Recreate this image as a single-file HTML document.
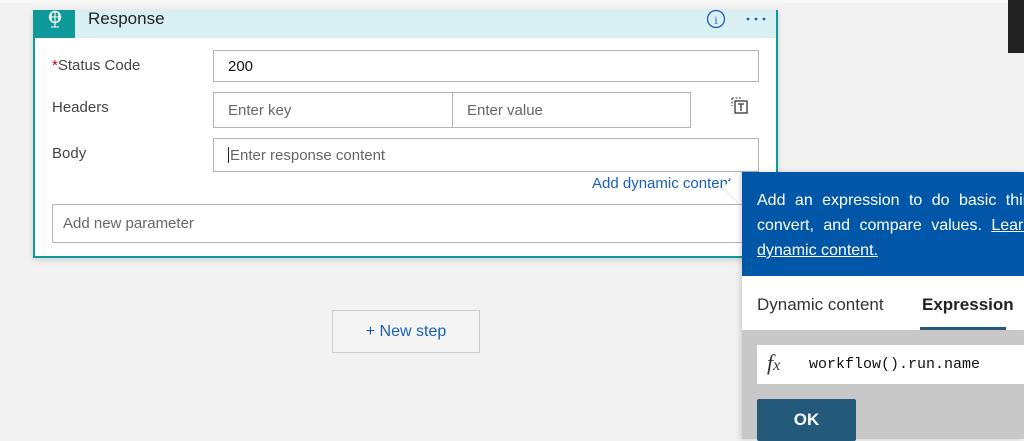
<!DOCTYPE html>
<html><head><style>
body{margin:0;width:1024px;height:439px;background:#f2f2f2;font-family:"Liberation Sans",sans-serif;position:relative;overflow:hidden}
.a{position:absolute;box-sizing:border-box}
.inp{background:#fff;border:1px solid #b3b3b3;font-size:15px;color:#333;padding-left:14px;display:flex;align-items:center}
.ph{color:#666}
.lbl{font-size:15px;color:#444}
</style></head><body>
<div class="a" style="left:0;top:0;width:1024px;height:3px;background:#f8f8f8"></div>
<div class="a" style="left:1008px;top:0;width:16px;height:53px;background:#222"></div>
<div class="a" style="left:33px;top:10px;width:745px;height:248px;background:#fff;border:2px solid #0f9a9a;border-top:none;box-shadow:0 2px 6px rgba(0,0,0,.15)"></div>
<div class="a" style="left:35px;top:10px;width:741px;height:28px;background:#d9f0f2"></div>
<div class="a" style="left:35px;top:10px;width:40px;height:28px;background:#0f9a9a"></div>
<svg class="a" style="left:46px;top:10px" width="18" height="20" viewBox="0 0 18 20"><circle cx="9" cy="7" r="5.5" fill="none" stroke="#fff" stroke-width="1.4"/><path d="M3.5 7h11M9 1.5v11M6 2.5q-2 4.5 0 9M12 2.5q2 4.5 0 9M9 13v4M5 17h8" stroke="#fff" stroke-width="1.1" fill="none"/></svg>
<div class="a" style="left:88px;top:9px;font-size:17px;color:#222">Response</div>
<svg class="a" style="left:706px;top:9px" width="20" height="20"><circle cx="10" cy="10" r="8.5" fill="none" stroke="#1a5fb4" stroke-width="1.3"/><text x="10" y="15" font-size="12" text-anchor="middle" fill="#1a5fb4" font-family="Liberation Serif">i</text></svg>
<svg class="a" style="left:746px;top:17px" width="22" height="4"><circle cx="2" cy="2" r="1.4" fill="#1a5fb4"/><circle cx="10" cy="2" r="1.4" fill="#1a5fb4"/><circle cx="18" cy="2" r="1.4" fill="#1a5fb4"/></svg>
<div class="a lbl" style="left:52px;top:57px"><span style="color:#c00">*</span>Status Code</div>
<div class="a inp" style="left:213px;top:50px;width:546px;height:32px;color:#111">200</div>
<div class="a lbl" style="left:52px;top:99px">Headers</div>
<div class="a inp ph" style="left:213px;top:92px;width:240px;height:36px">Enter key</div>
<div class="a inp ph" style="left:452px;top:92px;width:239px;height:36px">Enter value</div>
<svg class="a" style="left:730px;top:96px" width="20" height="20"><path d="M2 2h9M2 2v8" stroke="#333" stroke-dasharray="2 1.5" fill="none"/><rect x="5" y="5" width="12" height="12" fill="none" stroke="#333" stroke-width="1.3"/><path d="M8 8h6M11 8v7" stroke="#333" stroke-width="1.3"/></svg>
<div class="a lbl" style="left:52px;top:145px">Body</div>
<div class="a inp ph" style="left:213px;top:138px;width:546px;height:34px"><span style="border-left:1px solid #222;height:16px;margin-right:1px"></span>Enter response content</div>
<div class="a" style="left:592px;top:175px;font-size:15px;color:#1a5fb4">Add dynamic content</div>
<div class="a inp ph" style="left:52px;top:204px;width:708px;height:39px;border-radius:2px;padding-left:10px">Add new parameter</div>
<div class="a" style="left:332px;top:310px;width:148px;height:43px;border:1px solid #ccc;background:#f4f4f4;color:#1a5fb4;font-size:16px;display:flex;align-items:center;justify-content:center">+ New step</div>
<div class="a" style="left:728px;top:176px;width:22px;height:22px;background:#fff;transform:rotate(45deg);box-shadow:0 0 4px rgba(0,0,0,.15)"></div>
<div class="a" style="left:742px;top:172px;width:282px;height:267px;background:#fff;box-shadow:-2px 0 5px rgba(0,0,0,.15)"></div>
<div class="a" style="left:742px;top:172px;width:282px;height:104px;background:#0057a8"></div>
<div class="a" style="left:757px;top:188px;width:300px;color:#fff;font-size:16px;line-height:25px;word-spacing:5px;white-space:nowrap">Add an expression to do basic things<br>convert, and compare values. <u>Learn</u><br><u style="word-spacing:0">dynamic content.</u></div>
<div class="a" style="left:757px;top:295px;font-size:17px;color:#333">Dynamic content</div>
<div class="a" style="left:922px;top:295px;font-size:17px;color:#222;font-weight:bold">Expression</div>
<div class="a" style="left:920px;top:327px;width:86px;height:3px;background:#235a7a"></div>
<div class="a" style="left:742px;top:330px;width:282px;height:109px;background:#c8c8c8"></div>
<div class="a" style="left:757px;top:345px;width:267px;height:39px;background:#fff"></div>
<div class="a" style="left:767px;top:350px;font-family:'Liberation Serif',serif;font-style:italic;font-size:22px;color:#333">f<span style="font-size:16px">x</span></div>
<div class="a" style="left:809px;top:356px;font-family:'Liberation Mono',monospace;font-size:15px;color:#111">workflow().run.name</div>
<div class="a" style="left:757px;top:399px;width:99px;height:42px;background:#235a7a;border-radius:2px;color:#fff;font-weight:bold;font-size:17px;display:flex;align-items:center;justify-content:center">OK</div>
</body></html>
